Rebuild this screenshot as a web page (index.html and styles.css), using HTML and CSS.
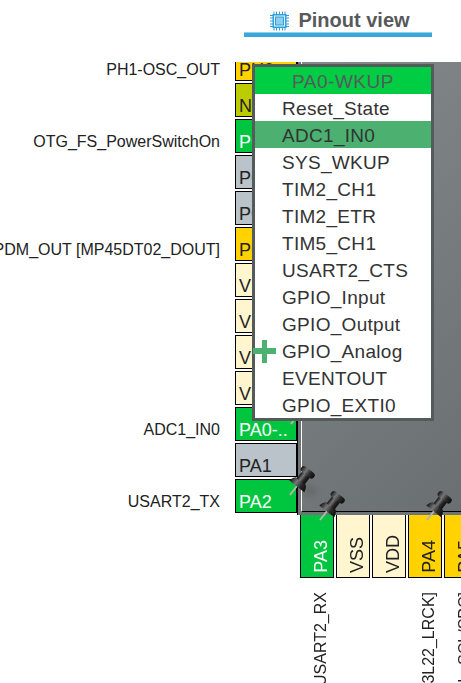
FILE: index.html
```html
<!DOCTYPE html>
<html lang="en">
<head>
  <meta charset="UTF-8">
  <title>Pinout view</title>
  <link rel="stylesheet" href="styles.css">
</head>
<body>

  <svg width="0" height="0" class="defs">
    <defs>
      <linearGradient id="tackGrad" x1="0" y1="0" x2="1" y2="0">
        <stop offset="0" stop-color="#111"/>
        <stop offset="0.35" stop-color="#777"/>
        <stop offset="0.65" stop-color="#2a2a2a"/>
        <stop offset="1" stop-color="#0c0c0c"/>
      </linearGradient>
      <g id="tack">
        <g transform="translate(2 30) rotate(38)">
          <path d="M-1 0 L-1 -13 L1 -13 L1 0 Z" fill="#b5b5a8"/>
          <path d="M-9.500 -11 Q-8 -18 -5 -18 L5 -18 Q8 -18 9.500 -11 Z" fill="url(#tackGrad)"/>
          <rect x="-5" y="-27" width="10" height="10" fill="url(#tackGrad)"/>
          <rect x="-8" y="-32" width="16" height="6.500" rx="3.200" fill="url(#tackGrad)"/>
        </g>
      </g>
    </defs>
  </svg>

  <header class="title">
    <div class="title-row">
      <svg class="chip-icon" width="19" height="20" viewBox="0 0 19 20">
        <g stroke="#2f9fdc" stroke-width="1">
          <path d="M4 0.500V3M6.500 0.500V3M9.500 0.500V3M12.500 0.500V3M15 0.500V3M4 17V19.500M6.500 17V19.500M9.500 17V19.500M12.500 17V19.500M15 17V19.500"/>
          <path d="M0 4.500H3M0 7H3M0 10H3M0 13H3M0 15.500H3M16 4.500H19M16 7H19M16 10H19M16 13H19M16 15.500H19"/>
        </g>
        <rect x="2.500" y="3" width="14" height="14" fill="#2f9fdc"/>
        <rect x="4" y="4.500" width="11" height="11" fill="#e8f5fb"/>
        <rect x="5.500" y="6" width="8" height="8" fill="#8fcdec" stroke="#2f9fdc"/>
      </svg>
      <span>Pinout view</span>
    </div>
    <div class="title-line"></div>
  </header>

  <main class="board">
    <div class="left-side">
      <div class="labels">
        <div class="label">PH1-OSC_OUT</div>
        <div class="label"></div>
        <div class="label">OTG_FS_PowerSwitchOn</div>
        <div class="label"></div>
        <div class="label"></div>
        <div class="label">PDM_OUT [MP45DT02_DOUT]</div>
        <div class="label"></div>
        <div class="label"></div>
        <div class="label"></div>
        <div class="label"></div>
        <div class="label">ADC1_IN0</div>
        <div class="label"></div>
        <div class="label">USART2_TX</div>
      </div>
      <div class="pins-left">
        <div class="pin yellow">PH0</div>
        <div class="pin olive">NRST</div>
        <div class="pin green">PC0</div>
        <div class="pin grey">PC1</div>
        <div class="pin grey">PC2</div>
        <div class="pin yellow">PC3</div>
        <div class="pin cream">VDD</div>
        <div class="pin cream">VSSA</div>
        <div class="pin cream">VREF</div>
        <div class="pin cream">VDDA</div>
        <div class="pin green">PA0-..</div>
        <div class="pin grey">PA1</div>
        <div class="pin green">PA2</div>
      </div>
      <div class="chip">
        <div class="chip-face"></div>
      </div>
    </div>

    <div class="bottom-side">
      <div class="pins-bottom">
        <div class="vpin green"><span>PA3</span></div>
        <div class="vpin cream"><span>VSS</span></div>
        <div class="vpin cream"><span>VDD</span></div>
        <div class="vpin yellow"><span>PA4</span></div>
        <div class="vpin yellow"><span>PA5</span></div>
      </div>
      <div class="labels-bottom">
        <div class="vlabel"><span>USART2_RX</span></div>
        <div class="vlabel"></div>
        <div class="vlabel"></div>
        <div class="vlabel"><span>I2S3_WS [CS43L22_LRCK]</span></div>
        <div class="vlabel"><span>SPI1_SCK [LIS302DL_SCL/SPC]</span></div>
      </div>
    </div>

    <div class="tack-shadow"></div>
    <svg class="tack tack-a" width="34" height="34"><use href="#tack"/></svg>
    <svg class="tack tack-b" width="34" height="34"><use href="#tack"/></svg>
    <svg class="tack tack-c" width="34" height="34"><use href="#tack"/></svg>
    <svg class="tack tack-d" width="34" height="34"><use href="#tack"/></svg>

    <div class="popup">
      <div class="popup-head">PA0-WKUP</div>
      <div class="popup-item">Reset_State</div>
      <div class="popup-item selected">ADC1_IN0</div>
      <div class="popup-item">SYS_WKUP</div>
      <div class="popup-item">TIM2_CH1</div>
      <div class="popup-item">TIM2_ETR</div>
      <div class="popup-item">TIM5_CH1</div>
      <div class="popup-item">USART2_CTS</div>
      <div class="popup-item">GPIO_Input</div>
      <div class="popup-item">GPIO_Output</div>
      <div class="popup-item plus">GPIO_Analog</div>
      <div class="popup-item">EVENTOUT</div>
      <div class="popup-item">GPIO_EXTI0</div>
    </div>
  </main>

</body>
</html>
```

FILE: styles.css
```css
html, body {
  margin: 0;
  height: 683px;
  overflow: hidden;
}
body {
  width: 461px;
  background: #fff;
  font-family: "Liberation Sans", Arial, sans-serif;
  position: relative;
}
.defs {
  position: absolute;
}

/* title */
.title {
  width: 188px;
  margin-left: 244px;
  height: 62px;
}
.title-row {
  display: flex;
  align-items: center;
  justify-content: center;
  gap: 9px;
  height: 32px;
  padding-top: 9px;
  box-sizing: border-box;
  padding-left: 4px;
  font-size: 20px;
  font-weight: bold;
  color: #58595b;
}
.title-line {
  height: 5px;
  background: #3ba8dc;
  border-top: 1px solid #8fd0ee;
  box-sizing: border-box;
}

/* board */
.board {
  position: relative;
  height: 621px;
  overflow: hidden;
}
.left-side {
  display: flex;
  height: 453px;
  overflow: hidden;
}
.labels {
  width: 220px;
  margin-top: -15px;
  flex-shrink: 0;
}
.label {
  height: 36px;
  padding-top: 11px;
  box-sizing: border-box;
  font-size: 16px;
  line-height: 24px;
  color: #222;
  white-space: nowrap;
  display: flex;
  justify-content: flex-end;
}
.pins-left {
  margin-left: 15px;
  margin-top: -15px;
  width: 62px;
  flex-shrink: 0;
}
.pin {
  height: 34px;
  margin-bottom: 2px;
  border: 1px solid #000;
  box-sizing: border-box;
  font-size: 18px;
  line-height: 44px;
  padding-left: 3px;
  overflow: hidden;
  white-space: nowrap;
  color: #222;
}
.chip {
  flex: 1;
  background: #6f7476;
  border-left: 1px solid #000;
  padding: 0 0 3px 3px;
}
.chip-face {
  height: 100%;
  box-sizing: border-box;
  border-left: 1px solid #fff;
  border-bottom: 1px solid #000;
  background: linear-gradient(135deg, #84898b, #6a6f71);
}

.green { background: #00c63f; color: #fff; }
.grey { background: #b9c3c9; }
.yellow { background: #ffd200; }
.olive { background: #bdcc00; }
.cream { background: #fff5cf; }

/* bottom pins */
.bottom-side {
  padding-left: 300px;
}
.pins-bottom {
  display: flex;
  gap: 2px;
  width: 200px;
}
.vpin {
  width: 34px;
  height: 63px;
  flex-shrink: 0;
  border: 1px solid #000;
  border-top: none;
  box-sizing: border-box;
  font-size: 18px;
  display: flex;
  justify-content: center;
  align-items: flex-end;
  padding-bottom: 4px;
  padding-left: 9px;
  color: #222;
}
.vpin.green { color: #fff; }
.vpin span, .vlabel span {
  writing-mode: vertical-rl;
  transform: rotate(180deg);
  white-space: nowrap;
}
.labels-bottom {
  display: flex;
  gap: 2px;
  margin-top: 14px;
  width: 200px;
}
.vlabel {
  width: 34px;
  height: 91px;
  flex-shrink: 0;
  font-size: 16px;
  color: #222;
  display: flex;
  justify-content: center;
  align-items: flex-end;
  padding-left: 8px;
  box-sizing: border-box;
  overflow: hidden;
}
.vlabel span {
  align-self: flex-start;
}

/* thumbtacks */
.tack {
  position: absolute;
}
.tack-a { left: 288px; top: 403px; }
.tack-b { left: 318px; top: 428px; }
.tack-c { left: 425px; top: 428px; }
.tack-d { left: 289px; top: 332px; }
.tack-shadow {
  position: absolute;
  left: 303px;
  top: 424px;
  width: 14px;
  height: 10px;
  border-radius: 50%;
  background: #555;
  opacity: 0.4;
  filter: blur(3px);
}

/* signal menu */
.popup {
  position: absolute;
  left: 252px;
  top: 2px;
  width: 182px;
  box-sizing: border-box;
  border: 3px solid #555b5b;
  background: #fff;
}
.popup-head {
  height: 27px;
  background: #00cc44;
  color: #555b5b;
  font-size: 19px;
  line-height: 30px;
  text-align: center;
  letter-spacing: 0.500px;
}
.popup-item {
  height: 27px;
  line-height: 29px;
  padding-left: 27px;
  font-size: 19px;
  color: #333;
  letter-spacing: 0.300px;
  position: relative;
}
.popup-item.selected {
  background: #4bb070;
}
.popup-item.plus::before {
  content: "";
  position: absolute;
  left: -2px;
  top: 11px;
  width: 23px;
  height: 6px;
  background: #4bb070;
}
.popup-item.plus::after {
  content: "";
  position: absolute;
  left: 7px;
  top: 3px;
  width: 5px;
  height: 23px;
  background: #4bb070;
}
```
